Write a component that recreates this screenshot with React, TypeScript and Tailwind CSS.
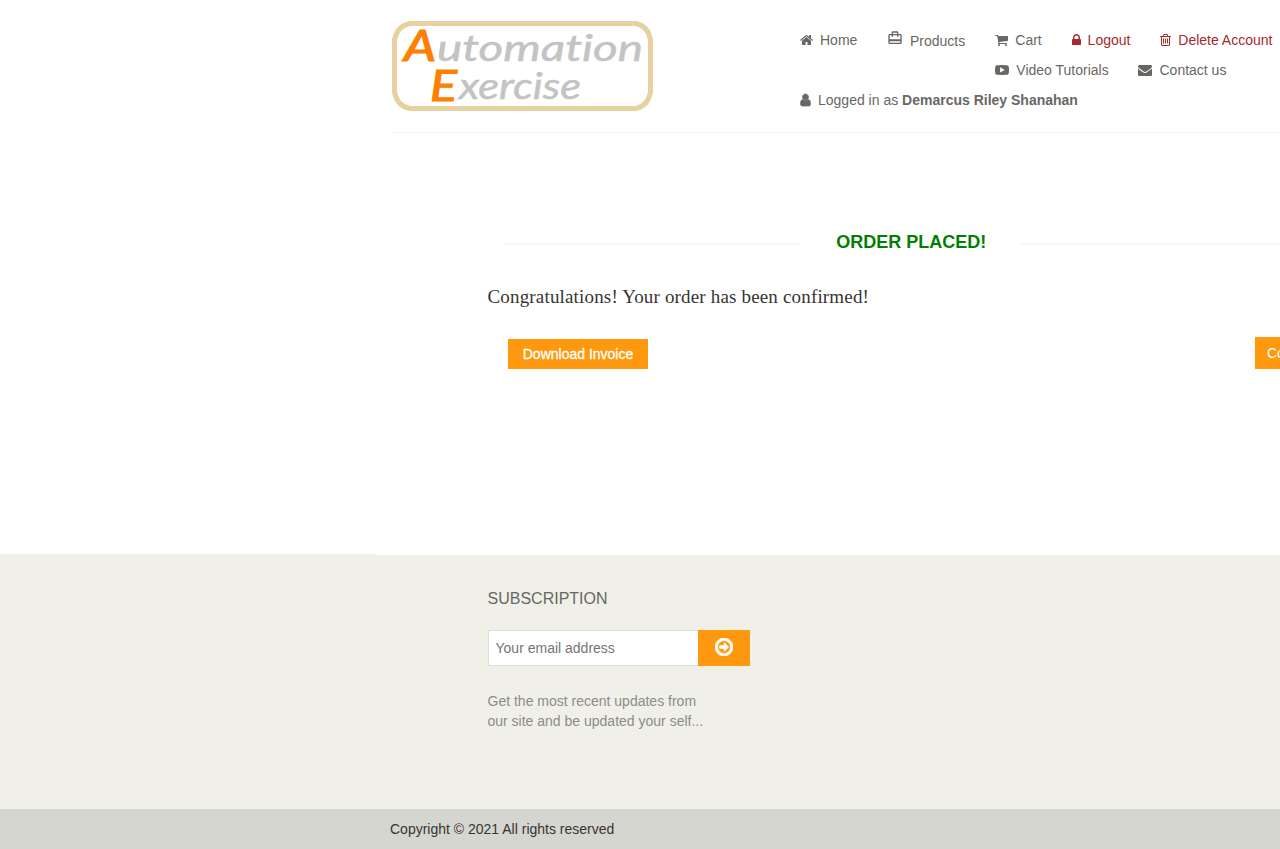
import React from "react";
import { MdCardTravel } from "react-icons/md";

type GlyphProps = { box: string; d: string; className: string };

function Glyph({ box, d, className }: GlyphProps) {
  return (
    <svg viewBox={box} className={className} fill="currentColor" aria-hidden="true">
      <path d={d} />
    </svg>
  );
}

const HOME =
  "M1472 992v480q0 26-19 45t-45 19h-384v-384h-256v384h-384q-26 0-45-19t-19-45v-480q0-1 .5-3t.5-3l575-474 575 474q1 2 1 6zm223-69l-62 74q-8 9-21 11h-3q-13 0-21-7l-692-577-692 577q-12 8-24 7-13-2-21-11l-62-74q-8-10-7-23.5t11-21.5l719-599q32-26 76-26t76 26l244 204v-195q0-14 9-23t23-9h192q14 0 23 9t9 23v408l219 182q10 8 11 21.5t-7 23.5z";
const CART =
  "M704 1536q0 52-38 90t-90 38-90-38-38-90 38-90 90-38 90 38 38 90zm896 0q0 52-38 90t-90 38-90-38-38-90 38-90 90-38 90 38 38 90zm128-1088v512q0 24-16.5 42.5t-40.5 21.5l-1044 122q13 60 13 70 0 16-24 64h920q26 0 45 19t19 45-19 45-45 19h-1024q-26 0-45-19t-19-45q0-11 8-31.5t16-36 21.5-40 15.5-29.5l-177-823h-204q-26 0-45-19t-19-45 19-45 45-19h256q16 0 28.5 6.5t19.5 15.5 13 24.5 8 26 5.5 29.5 4.5 26h1201q26 0 45 19t19 45z";
const LOCK =
  "M640 768h512v-192q0-106-75-181t-181-75-181 75-75 181v192zm832 96v576q0 40-28 68t-68 28h-960q-40 0-68-28t-28-68v-576q0-40 28-68t68-28h32v-192q0-184 132-316t316-132 316 132 132 316v192h32q40 0 68 28t28 68z";
const TRASH =
  "M704 736v576q0 14-9 23t-23 9h-64q-14 0-23-9t-9-23v-576q0-14 9-23t23-9h64q14 0 23 9t9 23zm256 0v576q0 14-9 23t-23 9h-64q-14 0-23-9t-9-23v-576q0-14 9-23t23-9h64q14 0 23 9t9 23zm256 0v576q0 14-9 23t-23 9h-64q-14 0-23-9t-9-23v-576q0-14 9-23t23-9h64q14 0 23 9t9 23zm128 724v-948h-896v948q0 22 7 40.5t14.5 27 10.5 8.5h832q3 0 10.5-8.5t14.5-27 7-40.5zm-672-1076h448l-48-117q-7-9-17-11h-317q-10 2-17 11zm928 32v64q0 14-9 23t-23 9h-96v948q0 83-47 143.5t-113 60.5h-832q-66 0-113-58.5t-47-141.5v-952h-96q-14 0-23-9t-9-23v-64q0-14 9-23t23-9h309l70-167q15-37 54-63t79-26h320q40 0 79 26t54 63l70 167h309q14 0 23 9t9 23z";
const PLAY =
  "M650 1230l600-340-600-340zM896 266q350 0 620 20q110 12 172 75q70 75 86 210q18 150 18 325t-18 325q-16 135-86 210q-62 63-172 75q-270 20-620 20t-620-20q-110-12-172-75q-70-75-86-210q-18-150-18-325t18-325q16-135 86-210q62-63 172-75q270-20 620-20z";
const ENVELOPE =
  "M1792 710v794q0 66-47 113t-113 47h-1472q-66 0-113-47t-47-113v-794q44 49 101 87 362 246 497 345 57 42 92.5 65.5t94.5 48 110 24.5h2q51 0 110-24.5t94.5-48 92.5-65.5q170-123 498-345 57-39 100-87zm0-294q0 79-49 151t-122 123q-376 261-468 325-10 7-42.5 31t-54 38.5-52 32.5-57.5 27-50 9h-2q-23 0-50-9t-57.5-27-52-32.5-54-38.5-42.5-31q-91-64-262-182.5t-205-142.5q-62-42-117-115.5t-55-136.5q0-78 41.5-130t118.5-52h1472q65 0 112.5 47t47.5 113z";
const USER =
  "M1536 1399q0 109-62.5 187t-150.5 78h-854q-88 0-150.5-78t-62.5-187q0-85 8.5-160.5t31.5-152 58.5-131 94-89 134.5-34.5q131 128 313 128t313-128q76 0 134.5 34.5t94 89 58.5 131 31.5 152 8.5 160.5zm-256-887q0 159-112.5 271.5t-271.5 112.5-271.5-112.5-112.5-271.5 112.5-271.5 271.5-112.5 271.5 112.5 112.5 271.5z";
const ARROW =
  "M1285 896q0 14-9 23l-320 320q-9 9-23 9-13 0-22.5-9.5t-9.5-22.5v-192h-352q-13 0-22.5-9.5t-9.5-22.5v-192q0-13 9.5-22.5t22.5-9.5h352v-192q0-14 9-23t23-9q12 0 24 10l319 319q9 9 9 23zm160 0q0-148-73-273t-198-198-273-73-273 73-198 198-73 273 73 273 198 198 273 73 273-73 198-198 73-273zm219 0q0 209-103 385.5t-279.5 279.5-385.5 103-385.5-103-279.5-279.5-103-385.5 103-385.5 279.5-279.5 385.5-103 385.5 103 279.5 279.5 103 385.5z";

function Logo() {
  return (
    <svg viewBox="0 0 264 92" className="h-[92px] w-[264px] shrink-0" role="img" aria-label="Automation Exercise">
      <path
        d="M20 3.5H246Q258 6 260.500 20V72Q258 86 246 88.500H20Q7 86 4.500 72V20Q7 6 20 3.500Z"
        fill="#fff"
        stroke="#e6d2a0"
        strokeWidth="5"
      />
      <g
        fontFamily="Lato, sans-serif"
        fontStyle="italic"
        strokeWidth="0.5"
        style={{ fontVariantLigatures: "none" }}
      >
        <g fill="#ff8000" stroke="#ff8000">
          <text x="14" y="41" fontSize="42" strokeWidth="1.2" textLength="32" lengthAdjust="spacingAndGlyphs">A</text>
          <text x="40" y="81" fontSize="43" strokeWidth="1.2" textLength="27" lengthAdjust="spacingAndGlyphs">E</text>
        </g>
        <g fill="#c3c3c3" stroke="#c3c3c3">
          <text x="47" y="41" fontSize="36" textLength="206" lengthAdjust="spacingAndGlyphs">utomation</text>
          <text x="69" y="78.500" fontSize="36" textLength="122" lengthAdjust="spacingAndGlyphs">xercise</text>
        </g>
      </g>
    </svg>
  );
}

function NavItem({ className, children }: { className: string; children: React.ReactNode }) {
  return <a className={"flex h-[30px] shrink-0 items-center whitespace-nowrap " + className}>{children}</a>;
}

export default function App() {
  return (
    <div className="flex h-[849px] w-[1280px] flex-col overflow-hidden bg-white font-['Liberation_Sans',Arial,sans-serif] text-sm text-[#696763]">
      <header className="ml-[390px] flex h-[133px] shrink-0 border-b border-[#f5f5f5] pt-5">
        <Logo />
        <nav className="ml-[146px] flex flex-col pt-[5px]">
          <div className="flex">
            <NavItem className="w-[88px]">
              <Glyph box="64 0 1664 1792" d={HOME} className="mr-[7px] h-[14px] w-[13px]" />
              Home
            </NavItem>
            <NavItem className="w-[107.3px]">
              <MdCardTravel className="-ml-px mr-[7px] mb-1 size-4" />
              <span className="pt-[2px]">Products</span>
            </NavItem>
            <NavItem className="w-[76.3px]">
              <Glyph box="64 0 1664 1792" d={CART} className="mr-[7px] h-[14px] w-[13px]" />
              Cart
            </NavItem>
            <NavItem className="w-[88.7px] text-[#a52a2a]">
              <Glyph box="320 0 1152 1792" d={LOCK} className="mr-[7px] h-[14px] w-[9px]" />
              Logout
            </NavItem>
            <NavItem className="text-[#a52a2a]">
              <Glyph box="192 0 1408 1792" d={TRASH} className="mr-[7px] h-[14px] w-[11px]" />
              Delete Account
            </NavItem>
          </div>
          <div className="flex pl-[195.3px]">
            <NavItem className="w-[143.2px]">
              <Glyph box="0 0 1792 1792" d={PLAY} className="mr-[7px] size-[14px]" />
              Video Tutorials
            </NavItem>
            <NavItem className="">
              <Glyph box="0 0 1792 1792" d={ENVELOPE} className="mr-[7px] size-[14px]" />
              Contact us
            </NavItem>
          </div>
          <NavItem className="">
            <Glyph box="192 0 1408 1792" d={USER} className="mr-[7px] h-[14px] w-[11px] stroke-current [stroke-width:90px]" />
            <span>
              Logged in as <b>Demarcus Riley Shanahan</b>
            </span>
          </NavItem>
        </nav>
      </header>

      <main className="h-[421px] shrink-0 pt-[97px]">
        <div className="ml-[503px] flex h-6 items-center">
          <div className="mt-[3px] h-[2px] w-[298px] bg-[#f5f5f5]" />
          <h2 className="w-[220px] pl-[0.5px] text-center text-lg font-bold text-[#008000]">ORDER PLACED!</h2>
          <div className="mt-[3px] h-[2px] flex-1 bg-[#f5f5f5]" />
        </div>
        <p className="mt-[29px] ml-[487.5px] h-7 font-['Liberation_Serif',serif] text-[19px] leading-7 tracking-[0.17px] text-[#363432]">
          Congratulations! Your order has been confirmed!
        </p>
        <div className="mt-[26px] ml-[508px] flex items-end">
          <a className="flex h-[30px] w-[140px] shrink-0 items-center justify-center bg-[#fe980f] whitespace-nowrap text-white [-webkit-text-stroke:0.3px_white]">
            Download Invoice
          </a>
          <a className="ml-[607px] flex h-8 w-[90px] shrink-0 items-center bg-[#fe980f] pl-3 whitespace-nowrap text-white">
            Continue
          </a>
        </div>
      </main>

      <footer className="flex shrink-0 flex-col">
        <div className="flex h-[255px] bg-[#f0f0e9]">
          <div className="w-[376px] shrink-0" />
          <div className="flex-1 border-t border-white pt-[34px] pl-[111.5px]">
            <h2 className="h-5 text-base leading-5">SUBSCRIPTION</h2>
            <form className="mt-[21px] ml-[0.5px] flex">
              <input
                className="h-9 w-[210px] border border-r-0 border-[#ddd] bg-white px-[6.5px] text-sm outline-none placeholder:text-[#757575]"
                placeholder="Your email address"
              />
              <button type="button" className="flex h-9 w-[52px] items-center justify-center bg-[#fe980f] pb-[2px] text-white">
                <Glyph box="128 128 1536 1536" d={ARROW} className="size-[18px] stroke-white [stroke-width:50px]" />
              </button>
            </form>
            <p className="mt-[25px] leading-5 text-[#8c8c88]">
              Get the most recent updates from
              <br />
              our site and be updated your self...
            </p>
          </div>
        </div>
        <div className="h-10 bg-[#d6d6d0] pl-[390px] leading-10 text-[#363432]">Copyright © 2021 All rights reserved</div>
      </footer>
    </div>
  );
}
